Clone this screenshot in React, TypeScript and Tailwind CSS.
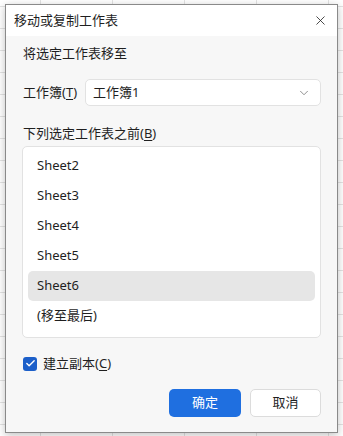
import React from 'react';
import { X, ChevronDown, Check } from 'lucide-react';

const sheets = ['Sheet2', 'Sheet3', 'Sheet4', 'Sheet5', 'Sheet6', '(移至最后)'];

export default function App() {
  return (
    <div
      className="w-[343px] h-[436px] overflow-hidden bg-white pl-[5px] pt-[4px] text-[13px] text-[#1f1f1f] bg-[linear-gradient(to_right,#e3e3e3_1px,transparent_1px),linear-gradient(to_bottom,#e3e3e3_1px,transparent_1px)] bg-[size:72px_22px] bg-[position:40px_6px]"
      style={{ fontFamily: '"Noto Sans", "Noto Sans CJK SC", sans-serif' }}
    >
      <div className="w-[333px] h-[429px] flex flex-col border border-[#8a8a8a] bg-[#f7f7f7] shadow-[0_2px_8px_rgba(0,0,0,0.25)]">
        {/* title bar */}
        <div className="h-[31px] shrink-0 bg-white flex items-center justify-between pl-[8px] pr-[9px]">
          <span className="text-[13px] leading-none">移动或复制工作表</span>
          <X size={15} strokeWidth={1.3} className="text-[#222]" />
        </div>

        <div className="flex flex-col px-[16px]">
          <div className="mt-[9px] h-[16px] leading-[16px] pl-[1px]">将选定工作表移至</div>

          <div className="mt-[18px] flex items-center gap-[8px]">
            <span className="pl-[1px] whitespace-nowrap">
              工作簿(<span className="underline underline-offset-2">T</span>)
            </span>
            <div className="flex-1 h-[27px] bg-white border border-[#e2e2e2] rounded-[5px] flex items-center justify-between pl-[7px] pr-[9px]">
              <span>工作簿1</span>
              <ChevronDown size={14} strokeWidth={1.4} className="text-[#777]" />
            </div>
          </div>

          <div className="mt-[19px] h-[16px] leading-[16px] pl-[1px]">
            下列选定工作表之前(<span className="underline underline-offset-2">B</span>)
          </div>

          <div className="mt-[5px] h-[192px] bg-white border border-[#e2e2e2] rounded-[5px] px-[5px] pt-[4px] flex flex-col">
            {sheets.map((s) => (
              <div
                key={s}
                className={`h-[30px] shrink-0 flex items-center pl-[9px] rounded-[5px] ${s === 'Sheet6' ? 'bg-[#e6e6e6]' : ''}`}
              >
                {s}
              </div>
            ))}
          </div>

          <div className="mt-[16px] flex items-center gap-[6px] pl-[1px]">
            <div className="w-[14px] h-[14px] rounded-[3px] bg-[#1c5fc9] flex items-center justify-center">
              <Check size={11} strokeWidth={3} className="text-white" />
            </div>
            <span>
              建立副本(<span className="underline underline-offset-2">C</span>)
            </span>
          </div>

          <div className="mt-[15px] flex justify-end gap-[9px]">
            <button className="w-[72px] h-[28px] rounded-[5px] bg-[#1f6fe0] text-white text-[13px]">确定</button>
            <button className="w-[71px] h-[28px] rounded-[5px] bg-white border border-[#dcdcdc] text-[13px]">取消</button>
          </div>
        </div>
      </div>
    </div>
  );
}
